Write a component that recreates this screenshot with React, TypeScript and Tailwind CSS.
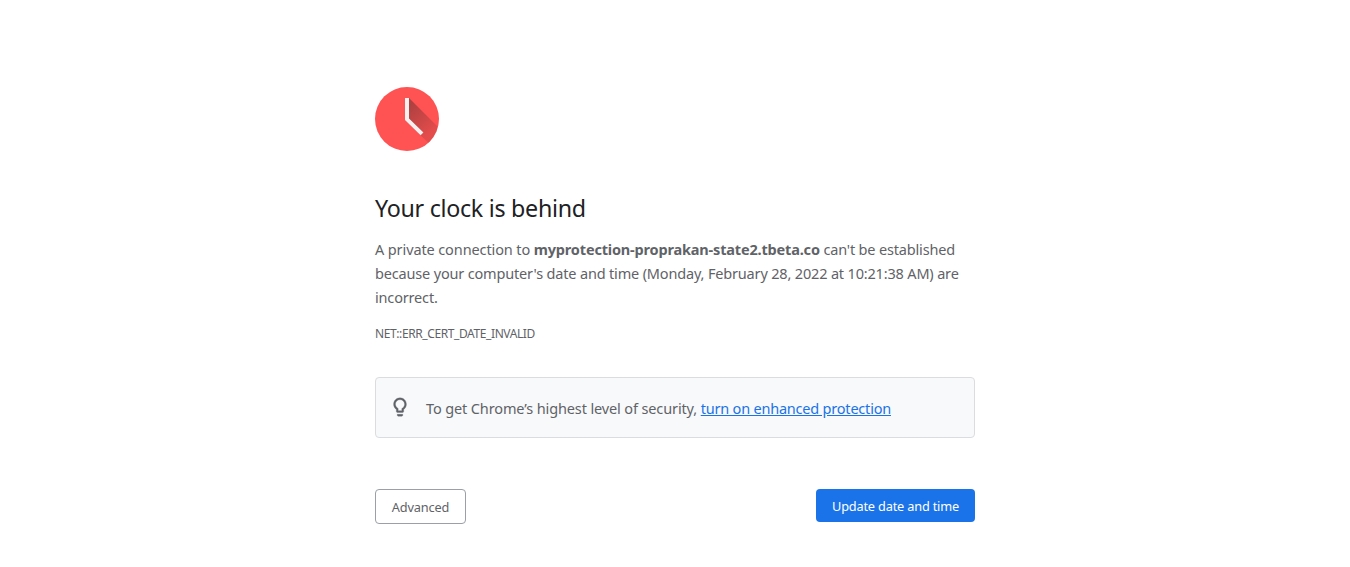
function ClockIcon() {
  return (
    <svg className="block size-16" viewBox="0 0 64 64" fill="none">
      <defs>
        <linearGradient id="shade" x1="33" y1="20" x2="56" y2="46" gradientUnits="userSpaceOnUse">
          <stop offset="0" stopColor="#212121" stopOpacity="0.36" />
          <stop offset="1" stopColor="#212121" stopOpacity="0.12" />
        </linearGradient>
        <clipPath id="face">
          <circle cx="32" cy="32" r="32" />
        </clipPath>
      </defs>
      <circle cx="32" cy="32" r="32" fill="#ff5252" />
      <path d="M34 11 L64 41 L60 62 L45.5 48.2 L34 32Z" fill="url(#shade)" clipPath="url(#face)" />
      <path d="M30 11H34V31.4L48.4 45.4L45.6 48.2L30 33Z" fill="#f1f1f1" />
    </svg>
  );
}

function BulbIcon() {
  return (
    <svg className="block size-[22px]" viewBox="0 0 24 24" fill="#5f6368" stroke="#5f6368" strokeWidth="0.35">
      <path d="M9 21c0 .55.45 1 1 1h4c.55 0 1-.45 1-1v-1H9v1zm3-19C8.14 2 5 5.14 5 9c0 2.38 1.19 4.47 3 5.74V17c0 .55.45 1 1 1h6c.55 0 1-.45 1-1v-2.26c1.81-1.27 3-3.36 3-5.74 0-3.86-3.14-7-7-7zm2.85 11.1l-.85.6V16h-4v-2.3l-.85-.6A4.997 4.997 0 017 9c0-2.76 2.24-5 5-5s5 2.24 5 5c0 1.63-.8 3.16-2.15 4.1z" />
    </svg>
  );
}

export default function App() {
  return (
    <main className="min-h-[567px] bg-white pt-[87px] font-['Noto_Sans',sans-serif] text-[14.5px] leading-6 text-[#5f6368]">
      <div className="mx-auto w-[600px]">
        <ClockIcon />
        <h1 className="mt-10 text-[23.25px] leading-[34px] tracking-[-0.29px] text-[#202124]">Your clock is behind</h1>
        <p className="mt-3 whitespace-nowrap tracking-[-0.17px]">
          <span className="tracking-[-0.11px]">A private connection to </span>
          <strong className="font-bold">myprotection-proprakan-state2.tbeta.co</strong> can't be established
          <br />
          because your computer's date and time (Monday, February 28, 2022 at 10:21:38 AM) are
          <br />
          incorrect.
        </p>
        <div className="mt-[13px] text-xs leading-6 tracking-[-0.4px]">NET::ERR_CERT_DATE_INVALID</div>
        <div className="mt-[31px] flex h-[61px] items-center rounded border border-[#dadce0] bg-[#f8f9fa] pl-[13px]">
          <div className="-mt-0.5">
            <BulbIcon />
          </div>
          <p className="ml-[15px] whitespace-nowrap tracking-[-0.125px]">
            To get Chrome’s highest level of security,{" "}
            <a href="#" className="tracking-[-0.21px] text-[#1a73e8] underline">turn on enhanced protection</a>
          </p>
        </div>
        <div className="mt-[51px] flex items-start justify-between text-[12.75px]">
          <button className="h-[35px] w-[91px] rounded border border-[#9aa0a6] bg-white tracking-[-0.15px]">Advanced</button>
          <button className="h-[33px] w-[159px] rounded bg-[#1a73e8] tracking-[-0.18px] text-white">Update date and time</button>
        </div>
      </div>
    </main>
  );
}
